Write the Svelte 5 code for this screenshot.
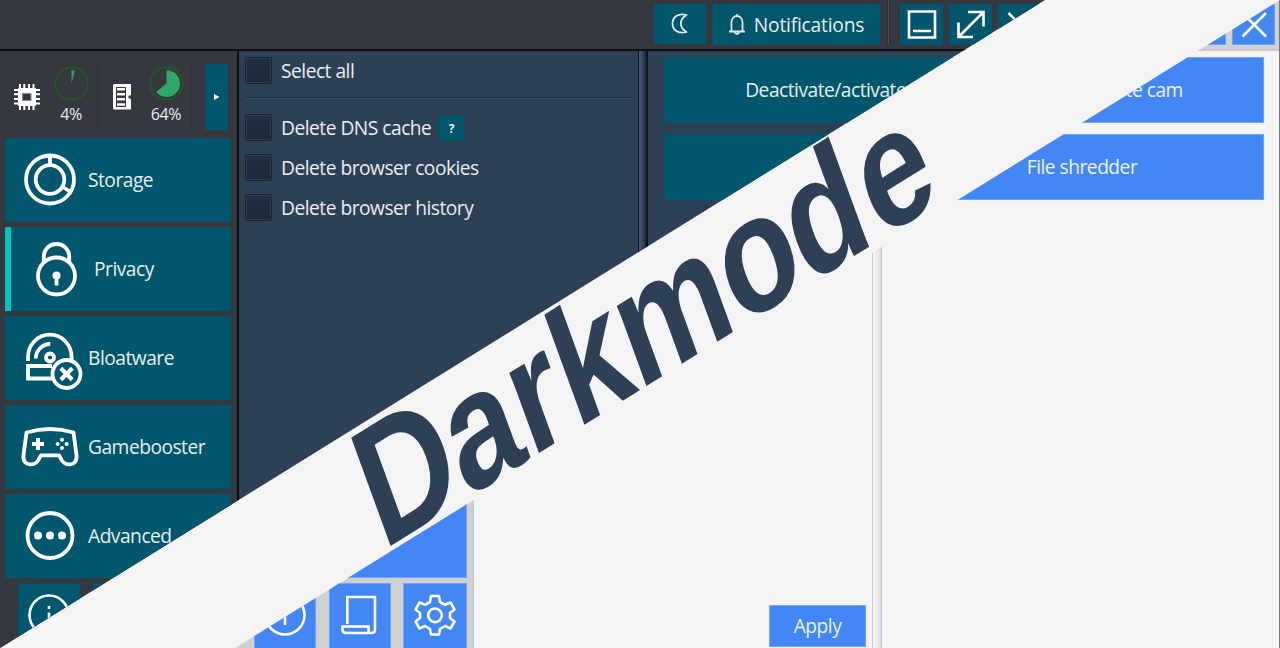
<script>
  const windows = [
    {
      theme: 'dark',
      notifications: true,
      stats: [{ kind: 'cpu', value: 4 }, { kind: 'ram', value: 64 }],
      nav: ['Storage', 'Privacy', 'Bloatware', 'Gamebooster', 'Advanced'],
      tools: ['info', '', ''],
      options: ['Select all', 'Delete DNS cache', 'Delete browser cookies', 'Delete browser history'],
      apply: false,
      actions: ['Deactivate/activate cam', '']
    },
    {
      theme: 'light',
      notifications: false,
      stats: [],
      nav: ['', '', '', '', ''],
      tools: ['info', 'log', 'gear'],
      options: [],
      apply: true,
      actions: ['Deactivate/activate cam', 'File shredder']
    }
  ];

  function slice(p) {
    const a = (p / 100) * Math.PI * 2;
    const x = 17.5 + 13.5 * Math.sin(a);
    const y = 17.5 - 13.5 * Math.cos(a);
    return `M17.5 17.5V4A13.5 13.5 0 ${p > 50 ? 1 : 0} 1 ${x} ${y}Z`;
  }
</script>

{#snippet icon(name)}
  {#if name === 'cpu'}
    <svg width="28" height="28" viewBox="0 0 28 28">
      <path d="M7 1v26M11.3 1v26M16 1v26M20.500 1v26M1 7h26M1 11.300h26M1 16h26M1 20.500h26" stroke="#fff" stroke-width="2" />
      <rect x="5" y="5" width="18" height="18" rx="1" fill="#fff" />
      <rect x="9.500" y="10.500" width="8.500" height="7" fill="#36383f" stroke="#888a8e" />
    </svg>
  {:else if name === 'ram'}
    <svg width="20" height="28" viewBox="0 0 20 28">
      <path d="M2.500 1h16.500v11l-2.500 1v2l2.500 1V26.500H2.500Q1 26.500 1 25V2.500Q1 1 2.500 1z" fill="#fff" />
      <path d="M4 4h10v20H4z" fill="#36383f" />
      <path d="M5 6.300h8M5 11.300h8M5 16.300h8M5 21.500h8" stroke="#fff" stroke-width="2.400" />
    </svg>
  {:else if name === 'Storage'}
    <svg width="56" height="56" viewBox="0 0 56 56" class="line">
      <circle cx="28" cy="27.500" r="24" /><circle cx="28" cy="27.500" r="14.300" />
      <path d="M28 5v9M40 34.500l8 5" />
    </svg>
  {:else if name === 'Privacy'}
    <svg width="56" height="56" viewBox="0 0 56 56" class="line">
      <circle cx="28.500" cy="35" r="18.500" />
      <path d="M15.800 21.500V15.500a12.700 12.500 0 0 1 25.400 0V21.500" />
      <circle cx="28.500" cy="34.500" r="4" fill="#fff" stroke="none" /><path d="M28.500 35v9.500" />
    </svg>
  {:else if name === 'Bloatware'}
    <svg width="60" height="60" viewBox="0 0 60 60" class="line">
      <path d="M8 33V29A21.800 22.300 0 0 1 51.600 29v4M15.800 30.500A14.500 14.500 0 0 1 30.300 16" />
      <circle cx="30" cy="29.500" r="4" />
      <path d="M32 38H8V50.500H32" />
      <circle cx="46.500" cy="46" r="14" />
      <path d="M40.800 40.300l11.500 11.500M52.300 40.300L40.800 51.800" stroke-width="4.200" />
    </svg>
  {:else if name === 'Gamebooster'}
    <svg width="58" height="42" viewBox="0 0 58 42" class="line">
      <path d="M5.500 6.500Q29-.5 52.500 6.500L55.500 29C57 41 43 41 39.500 32L38 29.300H20L18.500 32C15 41 1 41 2.500 29z" stroke-linejoin="round" />
      <path d="M17 12v12M11 18h12" stroke-width="4" />
      <g fill="#fff" stroke="none"><circle cx="41" cy="13.800" r="2" /><circle cx="41" cy="22" r="2" /><circle cx="36.600" cy="18" r="2" /><circle cx="45.600" cy="18" r="2" /></g>
    </svg>
  {:else if name === 'Advanced'}
    <svg width="56" height="56" viewBox="0 0 56 56" class="line">
      <circle cx="28" cy="27.500" r="22.500" />
      <g fill="#fff" stroke="none"><circle cx="16" cy="27.500" r="4" /><circle cx="28" cy="27.500" r="4" /><circle cx="40" cy="27.500" r="4" /></g>
    </svg>
  {:else if name === 'info'}
    <svg width="44" height="44" viewBox="0 0 44 44" class="line mid">
      <circle cx="22" cy="21" r="19.500" /><path d="M22 12v3M22 18.500v12.500" />
    </svg>
  {:else if name === 'log'}
    <svg width="44" height="44" viewBox="0 0 44 44" class="line mid">
      <path d="M9.300 30V3H37V36Q37 39 33 39H8Q4.500 39 4.500 36V32.500H30.500V39" />
    </svg>
  {:else if name === 'gear'}
    <svg width="44" height="44" viewBox="0 0 44 44" class="line mid">
      <path d="M18 2H26L27 8L32 10.800L37.500 8.500L41.500 15.500L37 19V24L41.500 27.500L37.500 34.500L32 32L27 35L26 40.500H18L17 35L12 32L6.500 34.500L2.500 27.500L7 24V19L2.500 15.500L6.500 8.500L12 10.800L17 8z" stroke-linejoin="round" />
      <circle cx="22" cy="21.300" r="6.800" />
    </svg>
  {/if}
{/snippet}

<main>
  {#each windows as w}
    <section class="window {w.theme}">
      <header>
        {#if w.notifications}
          <button class="moon" aria-label="Theme">
            <svg width="20" height="24" viewBox="0 0 20 24" class="line thin"><path d="M16.500 3C7 .5 2.500 6 2.500 11.500S7 22.500 16.500 20C9 15.500 9 7.500 16.500 3z" stroke-linejoin="round" /></svg>
          </button>
          <button class="notify">
            <svg width="18" height="24" viewBox="0 0 18 24" class="line thin"><path d="M1 18.500H17M3.500 18.500V9a5.500 6 0 0 1 11 0V18.500M9 1v2M6.500 19q2.500 4 5 0" /></svg>
            <span>Notifications</span>
          </button>
          <i class="bar"></i>
        {/if}
        <button class="win" aria-label="Minimize"><svg width="32" height="32" viewBox="0 0 32 32" class="line mid"><path d="M3 2.500H29V28.500H3zM7 22h18" /></svg></button>
        <button class="win" aria-label="Maximize"><svg width="32" height="32" viewBox="0 0 32 32" class="line mid"><path d="M3.500 28L28.500 3M13 3H28.500V17.500M3.500 13.500V28H18" /></svg></button>
        <button class="win" aria-label="Close"><svg width="32" height="32" viewBox="0 0 32 32" class="line mid"><path d="M4.500 4L28 27.500M28 4L4.500 27.500" /></svg></button>
      </header>
      <div class="body">
        <aside>
          <div class="stats">
            {#each w.stats as s}
              <div class="stat {s.kind}">
                {@render icon(s.kind)}
                <div class="gauge">
                  <svg width="35" height="35" viewBox="0 0 35 35"><circle cx="17.500" cy="17.500" r="16.300" fill="none" stroke="#1b5e20" stroke-width="1.600" /><path d={slice(s.value)} fill="#2fa866" /></svg>
                  <span>{s.value}%</span>
                </div>
              </div>
            {/each}
            {#if w.stats.length}
              <button class="more" aria-label="More"><svg width="6" height="6" viewBox="0 0 6 6"><path d="M0 0L5.500 3L0 6z" fill="#fff" /></svg></button>
            {/if}
          </div>
          <nav>
            {#each w.nav as item}
              <button class:active={item === 'Privacy'} aria-label={item || null}>
                <span class="pic">{@render icon(item)}</span><span>{item}</span>
              </button>
            {/each}
          </nav>
          <div class="tools">
            {#each w.tools as t}
              <button aria-label={t || null}>{@render icon(t)}</button>
            {/each}
          </div>
        </aside>
        <div class="options">
          {#each w.options as o, n}
            <div class="row"><i class="check"></i><span>{o}</span>{#if n === 1}<b class="help">?</b>{/if}</div>
            {#if n === 0}<hr />{/if}
          {/each}
          {#if w.apply}<button class="apply">Apply</button>{/if}
        </div>
        <div class="splitter"></div>
        <div class="actions">
          {#each w.actions as a}
            <button>{a}</button>
          {/each}
        </div>
      </div>
    </section>
  {/each}
  <svg class="title" width="1280" height="648" viewBox="0 0 1280 648">
    <text transform="matrix(1.14 -.714 .554 1.520 382.800 551)" font-size="100" x="0 73.700 130.100 169.900 224.200 313 372 435.500"><tspan font-size="103.500">D</tspan>arkmode</text>
  </svg>
</main>

<style>
  :global(body) { margin: 0; overflow: hidden; }
  main { position: relative; width: 1280px; height: 648px; overflow: hidden; background: #f4f4f4; font: 19.200px/26px "Open Sans", "Noto Sans", sans-serif; letter-spacing: -0.5px; }
  .window { position: absolute; top: 0; left: 0; width: 1045px; height: 648px; box-sizing: border-box; display: flex; flex-direction: column; clip-path: polygon(0 0, 100% 0, 0 100%); color: #e9eeef;
    --accent: #00566d; --edge: #00566d; --chrome: #36383f; --panel: #2d4056; --line: #0b0f14; }
  .light { left: 235px; width: 1045px; clip-path: polygon(100% 0, 100% 100%, 0 100%); color: #eef3ff; border-right: 1px solid #777;
    --accent: #4387f6; --edge: #6fa4fa; --chrome: #d0d0d0; --panel: #f4f4f4; --line: #c4c4c4; }
  button { border: 0; padding: 0; margin: 0; background: var(--accent); color: inherit; font: inherit; letter-spacing: inherit; display: flex; align-items: center; justify-content: center; }
  .light button { box-shadow: inset 0 0 0 1px var(--edge); }
  svg { display: block; flex: none; overflow: visible; }
  .line { fill: none; stroke: #fff; stroke-width: 3.800; }
  .mid { stroke-width: 2.600; }
  .thin { stroke-width: 1.800; stroke: #e4e9ea; }

  header { flex: none; height: 51px; box-sizing: border-box; padding: 4px 4px 0 0; display: flex; justify-content: flex-end; background: var(--chrome); border-bottom: 2px solid var(--line); }
  .light header { border-color: #cacaca; }
  .moon { width: 52px; height: 40px; margin-right: 6px; }
  .notify { width: 168px; height: 41px; gap: 8px; letter-spacing: -0.2px; }
  .bar { width: 1px; height: 45px; margin: -4px 10px 0 7px; border: solid #2b2e35; border-width: 0 1px; background: #4a5260; }
  .win { width: 43px; height: 41px; margin-left: 6px; }
  .bar + .win { margin-left: 0; }

  .body { flex: 1; display: flex; min-height: 0; background: var(--panel); }
  aside { flex: none; width: 237px; box-sizing: border-box; background: var(--chrome); }
  .light aside { width: 238px; padding-left: 1px; }
  .stats { height: 87px; display: flex; box-sizing: border-box; padding: 11px 0 0 13px; }
  .stat { display: flex; height: 70px; padding-top: 21px; box-sizing: border-box; border-right: 1px solid #2a3440; box-shadow: 2px 0 #36383f, 3px 0 #2a3440; }
  .cpu { width: 84px; }
  .ram { width: 80px; margin-left: 15px; }
  .gauge { margin-top: -17px; display: flex; flex-direction: column; align-items: center; font-size: 16px; line-height: 22px; width: 40px; letter-spacing: -0.4px; }
  .cpu .gauge { margin-left: 10px; }
  .ram .gauge { margin-left: 14px; }
  .gauge svg { margin-bottom: 2px; }
  .more { width: 23px; height: 66px; margin: 2px 0 0 13px; }

  nav { display: flex; flex-direction: column; gap: 5px; padding-left: 5px; }
  nav button { width: 226px; height: 84px; justify-content: flex-start; }
  .pic { width: 64px; margin-left: 13px; margin-right: 6px; display: flex; justify-content: center; }
  nav .active { border-left: 6px solid #00c5bf; }
  .tools { display: flex; gap: 13px; padding: 5px 6px 0 18px; }
  .tools button { width: 62px; height: 66px; }
  .tools button:last-child { width: 64px; margin-left: -1px; }

  .options { flex: none; width: 401px; box-sizing: border-box; padding: 6px 7px 2px 6px; display: flex; flex-direction: column; border-left: 2px solid var(--line); }
  .row { height: 27px; display: flex; align-items: center; gap: 9px; margin-bottom: 13px; }
  .check { width: 27px; height: 27px; box-sizing: border-box; border: 1px solid #172331; border-radius: 2px; background: linear-gradient(#1e3040, #192a39); box-shadow: inset 0 0 0 1px #2b3e50; }
  .row span { line-height: 25px; margin-top: -1px; }
  hr { width: 100%; height: 1px; margin: 0 0 16px; border: 0; background: #1f2f41; box-shadow: 0 1px #3a4f66; }
  .help { width: 26px; height: 26px; margin-left: -2px; border-radius: 3px; background: var(--accent); font: 700 12px/28px "Open Sans", sans-serif; text-align: center; }
  .apply { width: 97px; height: 42px; margin: auto 0 0 auto; }
  .splitter { flex: none; width: 10px; box-sizing: border-box; border: solid #10151c; border-width: 0 2px 0 1px; background: linear-gradient(90deg, #4b6078, #2d4056 60%, #1d2a38); }
  .light .splitter { border-color: #c6c6c6; border-width: 0 1px; background: linear-gradient(90deg, #f7f7f7, #dcdcdc); }
  .light .options { border-left-width: 1px; width: 399px; padding: 6px 6px 1px; }
  .actions { flex: 1; padding: 6px 17px 0 16px; display: flex; flex-direction: column; gap: 11px; }
  .actions button { height: 66px; flex: none; }
  .light .actions { padding: 6px 15px 0 18px; }

  .title { position: absolute; inset: 0; }
  .title text { font-family: "Liberation Sans", sans-serif; font-weight: 700; fill: #2d4056; letter-spacing: 0; }
</style>
